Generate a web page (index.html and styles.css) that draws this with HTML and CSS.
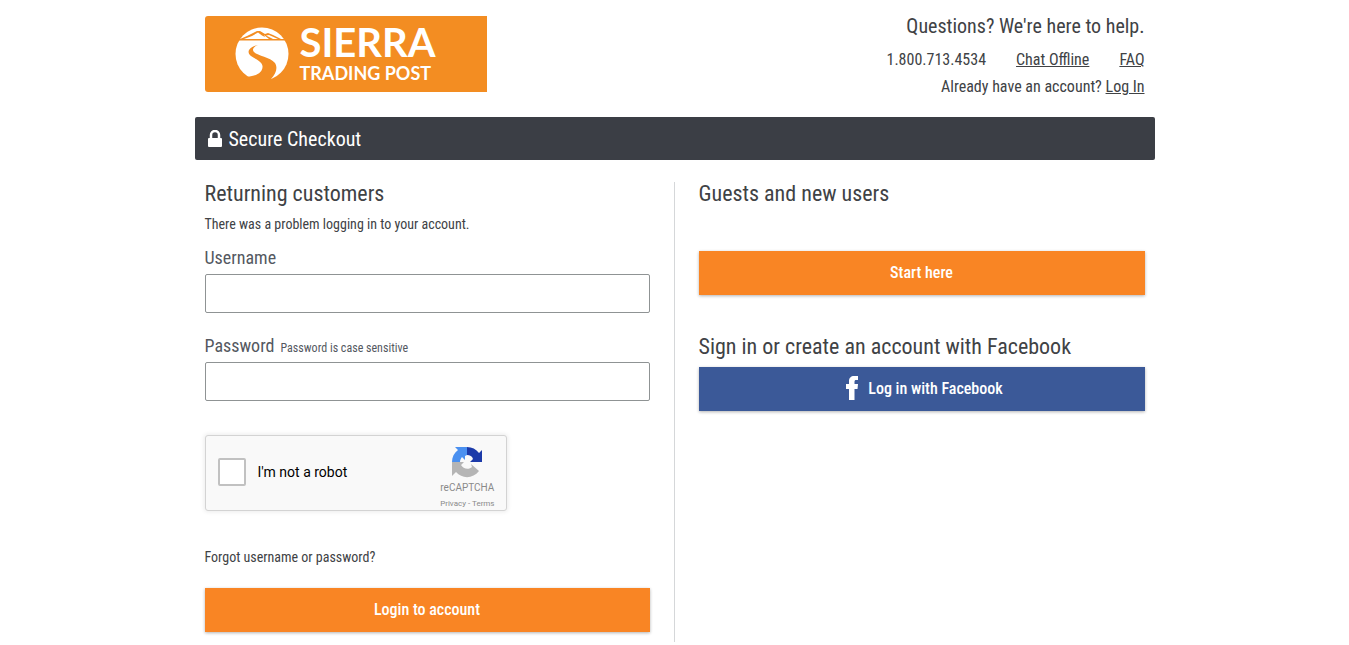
FILE: index.html
```html
<!DOCTYPE html>
<html lang="en">
<head>
  <meta charset="UTF-8" />
  <title>Secure Checkout - Sierra Trading Post</title>
  <link rel="stylesheet" href="styles.css">
</head>
<body>
  <div class="container">
    <header class="header">
      <a class="logo" href="#" aria-label="Sierra Trading Post">
        <svg class="logo-mark" viewBox="0 0 54 54" width="54" height="54" aria-hidden="true">
          <circle cx="27" cy="27" r="26.5" fill="#fff"/>
          <!-- ridge and horizon -->
          <path d="M5 12 L12 9 L22 4 L25 4 L30 7 L33 6 L38 8 L46 12 H51 V13.500 H0 V12 Z" fill="#f38d22"/>
          <path d="M9 12 L17 9 L23 5.500 L27 8.500 L30 10 L29 8 L34 12 Z M31 8.500 L34 8 L43 12 H38 Z" fill="#fff"/>
          <!-- road -->
          <path d="M23 18 C14 20 11 25 16 29 C20 32 27 34 27.500 39 C28 45 22 49 12 50 L11 55 H35 L36 52 C41 47 43 41 40 36 C35 30 23 29 19 25 C16.500 22 19 19.500 23 18 Z" fill="#f38d22"/>
        </svg>
        <span class="logo-text">
          <span class="logo-name">SIERRA</span>
          <span class="logo-sub">TRADING POST</span>
        </span>
      </a>
      <div class="help">
        <p class="help-title">Questions? We're here to help.</p>
        <p class="help-links">
          <span>1.800.713.4534</span>
          <a href="#">Chat Offline</a>
          <a href="#">FAQ</a>
        </p>
        <p>Already have an account? <a href="#">Log In</a></p>
      </div>
    </header>

    <h1 class="bar">
      <svg viewBox="0 0 14 18" width="14" height="18" aria-hidden="true">
        <path d="M3 9 V5 a4 4 0 0 1 8 0 V9" fill="none" stroke="#fff" stroke-width="2.500"/>
        <rect x="0" y="8" width="14" height="9" rx="1" fill="#fff"/>
      </svg>
      Secure Checkout
    </h1>

    <main class="columns">
      <form class="returning">
        <h2>Returning customers</h2>
        <p class="error">There was a problem logging in to your account.</p>

        <div class="field">
          <label for="username">Username</label>
          <input type="text" id="username" />
        </div>
        <div class="field">
          <label for="password">Password <small>Password is case sensitive</small></label>
          <input type="password" id="password" />
        </div>

        <div class="captcha">
          <input type="checkbox" id="robot" />
          <label for="robot">I'm not a robot</label>
          <div class="captcha-brand">
            <svg viewBox="0 0 32 32" width="32" height="32" aria-hidden="true">
              <path d="M16 1 H4 L7 4 C3 7 1 11 1 16 H9 C9 14 10 12 11 11 L14 14 V10 L16 9 Z" fill="#4a90f0"/>
              <path d="M16 1 C21 1 25 3 28 7 L31 4 V16 H19 L22 13 C21 10 19 9 16 9 Z" fill="#1c3aa9"/>
              <path d="M1 16 H9 L13 16 L10 19 C12 23 18 24 21 21 L20 18 L28 25 C22 33 11 33 5 26 L1 30 Z" fill="#b5b5b5"/>
            </svg>
            <span class="captcha-name">reCAPTCHA</span>
            <span class="captcha-links"><a href="#">Privacy</a> - <a href="#">Terms</a></span>
          </div>
        </div>

        <a class="forgot" href="#">Forgot username or password?</a>
        <button type="button" class="btn">Login to account</button>
      </form>

      <section class="guests">
        <h2>Guests and new users</h2>
        <button type="button" class="btn btn-start">Start here</button>
        <h2>Sign in or create an account with Facebook</h2>
        <button type="button" class="btn btn-facebook">
          <svg viewBox="0 0 12 24" width="12" height="24" aria-hidden="true">
            <path d="M3 24 V13 H0 V8 H3 V5 C3 2 5 0 8 0 H12 V4 H10 C9 4 8.500 4.500 8.500 6 V8 H12 L11.500 13 H8.500 V24 Z" fill="#fff"/>
          </svg>
          Log in with Facebook
        </button>
      </section>
    </main>
  </div>
</body>
</html>
```
FILE: styles.css
```css
* { box-sizing: border-box; }
body {
  margin: 0;
  background: #fff;
  color: #404245;
  font-family: "Roboto Condensed", Roboto, sans-serif;
  font-size: 16px;
}
h1, h2, p { margin: 0; font-weight: normal; }
a { color: inherit; }
.container { max-width: 960px; margin: 0 auto; }

.header {
  display: flex;
  justify-content: space-between;
  align-items: flex-start;
  padding: 16px 10px 0;
}
.logo {
  display: flex;
  align-items: center;
  gap: 11px;
  width: 282px;
  height: 76px;
  padding-left: 30px;
  background: #f38d22;
  border-radius: 3px 0 0 3px;
  color: #fff;
  font-family: Lato, sans-serif;
  font-weight: 700;
  text-decoration: none;
}
.logo-text { display: flex; flex-direction: column; }
.logo-name { font-size: 40px; line-height: 38px; }
.logo-sub { font-size: 18px; line-height: 24px; }

.help { text-align: right; line-height: 27px; }
.help-title { font-size: 20px; line-height: 20px; margin-bottom: 10px; }
.help-links { display: flex; justify-content: flex-end; gap: 30px; }

.bar {
  display: flex;
  align-items: center;
  gap: 7px;
  height: 43px;
  margin-top: 17px;
  padding: 0 13px;
  background: #3b3e45;
  border-radius: 2px;
  color: #fff;
  font-size: 20px;
}

.columns {
  display: grid;
  grid-template-columns: 1fr 1fr;
  margin-top: 22px;
  padding: 0 10px;
}
.columns h2 { font-size: 22px; line-height: 24px; }
.returning {
  padding: 0 24px 10px 0;
  border-right: 1px solid #d5d7d9;
}
.guests { padding-left: 24px; }

.error { font-size: 14px; line-height: 20px; margin: 8px 0 12px; }
.field { margin-bottom: 21px; }
.field label {
  display: block;
  color: #54585f;
  font-size: 18px;
  line-height: 24px;
  margin-bottom: 4px;
}
.field small { font-size: 12px; line-height: 12px; margin-left: 2px; }
.field input {
  display: block;
  width: 100%;
  height: 39px;
  padding: 0 10px;
  border: 1px solid #8f9394;
  border-radius: 2px;
  font: inherit;
}

.captcha {
  display: flex;
  align-items: center;
  width: 302px;
  height: 76px;
  margin-top: 34px;
  padding: 0 11px 3px 12px;
  background: #f9f9f9;
  border: 1px solid #d3d3d3;
  border-radius: 3px;
  box-shadow: 0 0 4px 1px rgba(0,0,0,0.08);
  color: #000;
  font-family: Roboto, sans-serif;
  font-size: 14px;
}
.captcha input {
  appearance: none;
  width: 28px;
  height: 28px;
  margin: 0 12px 0 0;
  background: #fff;
  border: 2px solid #c1c1c1;
  border-radius: 2px;
}
.captcha-brand {
  display: flex;
  flex-direction: column;
  align-items: center;
  margin-left: auto;
  padding-top: 13px;
  color: #8a8a8a;
}
.captcha-name { font-size: 10px; line-height: 20px; }
.captcha-links { font-size: 8px; line-height: 12px; }
.captcha-brand a { text-decoration: none; }

.forgot {
  display: block;
  margin: 36px 0 21px;
  font-size: 14px;
  line-height: 20px;
  text-decoration: none;
}
.btn {
  display: flex;
  align-items: center;
  justify-content: center;
  gap: 10px;
  width: 100%;
  height: 44px;
  padding: 0 0 2px;
  border: none;
  background: #f98524;
  box-shadow: 0 1px 3px rgba(0,0,0,0.3);
  color: #fff;
  font-family: inherit;
  font-size: 16px;
  font-weight: 500;
  cursor: pointer;
}
.btn-start { margin: 45px 0 40px; }
.btn-facebook { margin-top: 8px; padding-left: 6px; background: #3b5998; }
```
